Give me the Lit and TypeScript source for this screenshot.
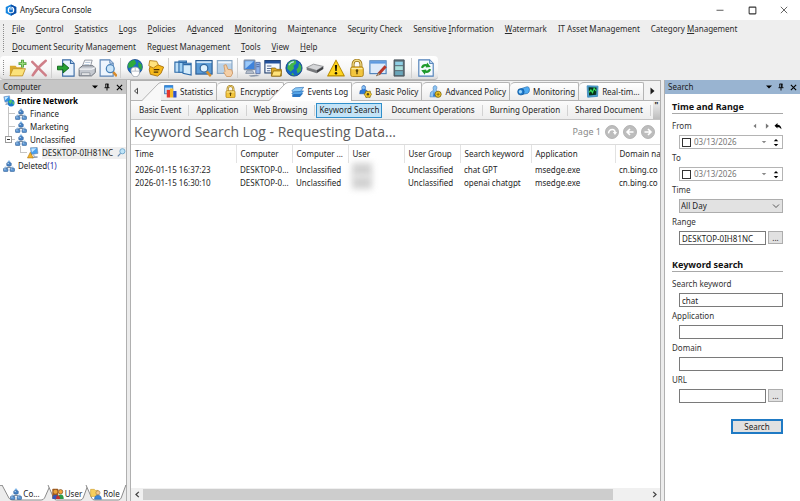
import { LitElement, html, css, svg, nothing } from "lit";
import { customElement, property } from "lit/decorators.js";
import { classMap } from "lit/directives/class-map.js";

const network = svg`
  <path d="M8 7v3M4 12v-2h8v2" fill="none" stroke="#5b6f86"/>
  <circle cx="8" cy="2.6" r="1.8" fill="#7fb4e6"/><rect x="5" y="3.6" width="6" height="4.4" rx="1" fill="#4a86c8" stroke="#1d4f8c" stroke-width=".7"/>
  <circle cx="3.5" cy="10.4" r="1.6" fill="#9fc6ea"/><rect x=".6" y="11" width="6" height="4.4" rx="1" fill="#5b94d0" stroke="#1d4f8c" stroke-width=".7"/>
  <circle cx="12.5" cy="10.4" r="1.6" fill="#9fc6ea"/><rect x="9.4" y="11" width="6" height="4.4" rx="1" fill="#5b94d0" stroke="#1d4f8c" stroke-width=".7"/>
  <path d="M6 4.6h2M1.6 12h2M10.4 12h2" stroke="#d8ecfb"/>`;

const lock = svg`
  <path d="M4.5 8V4.6a3.5 3.5 0 0 1 7 0V8" fill="none" stroke="#9a7416" stroke-width="2.6"/>
  <path d="M4.5 8V4.6a3.5 3.5 0 0 1 7 0V8" fill="none" stroke="#f5dd84" stroke-width="1.2"/>
  <rect x="2.4" y="7" width="11.2" height="8.6" rx="1.6" fill="#f2c53d" stroke="#a87a10" stroke-width=".8"/>
  <path d="M3.2 8.6h9.6" stroke="#fdf0b0"/><circle cx="8" cy="10.4" r="1.2" fill="#5a430a"/><path d="M8 10.6v3" stroke="#5a430a" stroke-width="1.2"/>`;

const ICONS: Record<string, unknown> = {
  logo: svg`<path d="M8 .5 15 4v8l-7 3.7L1 12V4z" fill="#1585e0"/><path d="M8 .5 15 4v8l-7 3.7z" fill="#0b4ea8"/><circle cx="8" cy="8" r="4.4" fill="#fff"/><path d="M6.3 8V6.6a1.7 1.7 0 0 1 3.4 0V8" fill="none" stroke="#1572cc"/><rect x="5.6" y="7.4" width="4.8" height="3.6" rx="1" fill="#1572cc"/>`,
  newFolder: svg`<path d="M.8 6h5l1.2 1.4H12V15H.8z" fill="#d9a92c"/><path d="M.8 15 3.6 8.6h11L12 15z" fill="#fbe27a" stroke="#c3942a" stroke-width=".8"/><path d="M12 .6v7M8.5 4.1h7" stroke="#4f9e3a" stroke-width="2.6"/><path d="M12 1.4v5.4M9.3 4.1h5.4" stroke="#9ada7d" stroke-width="1.1"/>`,
  remove: svg`<path d="M2 2.5 14 14.5M14 1.5Q7 7 2.4 14.5" fill="none" stroke="#cf7f88" stroke-width="2.2" stroke-linecap="round"/>`,
  importDoc: svg`<path d="M5 .8h7l3.2 3.2v11.2H5z" fill="#e8f2fc" stroke="#3a6ba5"/><path d="M12 .8V4h3.2" fill="#b8d2ee" stroke="#3a6ba5"/><path d="M.4 6.4h5V3.6L10.6 8l-5.2 4.4V9.6h-5z" fill="#27a232" stroke="#0d6117" stroke-width=".8"/>`,
  printer: svg`<path d="M6 1h6.6L11 7H3.6z" fill="#fff" stroke="#8a8f98" stroke-width=".8"/><path d="M6.4 3h4.6M5.6 5h4.6" stroke="#9db4cc" stroke-width=".7"/><path d="M1 8.4 4 6h9.4L15.4 8v4L12 15H1z" fill="#c4c8cf" stroke="#61666f" stroke-width=".8"/><path d="M1.2 9h11l3-1.2" fill="none" stroke="#f4f5f7"/><path d="M3 12.4h7.6v2H3z" fill="#fff" stroke="#747a84" stroke-width=".6"/>`,
  preview: svg`<path d="M1 .8h8.6l3 3v11.4H1z" fill="#eef5fd" stroke="#5b84b5"/><path d="M9.6.8v3h3" fill="#c3d9f0" stroke="#5b84b5" stroke-width=".8"/><path d="m12.6 11.6 2.6 3" stroke="#d88b2c" stroke-width="2.2" stroke-linecap="round"/><circle cx="10" cy="8.6" r="3.5" fill="#cbe6fa" stroke="#4880b8" stroke-width="1.1"/>`,
  webMouse: svg`<circle cx="8" cy="7" r="6.6" fill="#1d6fc4" stroke="#0b3c7a" stroke-width=".6"/><path d="M2 4Q5 0 8 1l1 3-3 3-4 1zM11 2.4l3 2.6v5l-3-3z" fill="#2faa3c"/><path d="M4.4 10C4.4 6.4 11.6 6 12 10c.6 3.2-1 5.8-3.6 5.8S4.4 13 4.4 10z" fill="#fff" stroke="#8a94a0" stroke-width=".7"/><path d="M8.2 7.4v3.2M5 10.8h6.6" stroke="#9aa4b0" stroke-width=".6"/>`,
  note: svg`<path d="m3.6 3 4.6 1.6 6.6 2.6-2.4 5.6-3 2.4-6.4-1.6-1-4z" fill="#f6b91c" stroke="#a86f08" stroke-width=".8"/><path d="M2.4 1.4 8.6 2l1.4 3-4.4 3-4-2z" fill="#ffe27d" stroke="#a86f08" stroke-width=".7"/><path d="M6 9.4h5M6 11.6h4" stroke="#4c3305" stroke-width="1.1"/>`,
  windows: svg`<path d="M.8 2.8h6.6v9H.8z" fill="#bfe0f8" stroke="#2c6aa8"/><path d="M4.4 1.8H11v10H4.4z" fill="#9fd0f4" stroke="#2c6aa8"/><path d="M8 3.8h7.2v10.4L8 12.6z" fill="#d5ecfb" stroke="#2c6aa8"/><path d="M4.6 3H11M8.2 5h7" stroke="#2c6aa8"/>`,
  screenSearch: svg`<rect x=".8" y="1.4" width="14.4" height="12" fill="#5b9bd6" stroke="#2b5c92"/><path d="M1.4 2.8h13.2" stroke="#cfe4f6" stroke-width="1.6"/><path d="m10 10.6 3.4 4" stroke="#d9912e" stroke-width="2.2" stroke-linecap="round"/><circle cx="8" cy="8.2" r="3.4" fill="#dff1fd" stroke="#34689e" stroke-width="1.1"/>`,
  screenHand: svg`<rect x="1.2" y="1.4" width="13" height="11.4" fill="#b9d2e8" stroke="#86a6c4"/><path d="M2 3h11.6" stroke="#eef5fb" stroke-width="1.6"/><path d="M7 5.6 9 5l1.6 4.2 3.4.4.8 3-1.6 3H9.4L7 12l1-1z" fill="#f4cfa6" stroke="#cf9a66" stroke-width=".8"/>`,
  computers: svg`<rect x="1" y="1" width="9.6" height="8.4" rx=".6" fill="#3e82dc" stroke="#7e8ea6"/><path d="M2 2h7.6L2 8.6z" fill="#9cc9f8"/><path d="M3.4 10.4h5l1.6 2.4H2.4z" fill="#b8c2d0" stroke="#6c7a90" stroke-width=".6"/><path d="M11.4 3h3.8v10h-3.8z" fill="#8fb2ea" stroke="#5a6fa0" stroke-width=".8"/><path d="M12 5h2.6M12 6.8h2.6" stroke="#3f5a94" stroke-width=".7"/><path d="m5 14.6 7-.6 3 1.2-8 .6z" fill="#8b97aa"/>`,
  windowFolder: svg`<rect x=".8" y="1.4" width="13.6" height="11" fill="#f6faff" stroke="#22406e"/><path d="M.8 2.8h13.6" stroke="#22519c" stroke-width="2.4"/><path d="M2.6 6.2h4M2.6 8.4h4M2.6 10.4h3" stroke="#5b6f96"/><path d="M6.6 8h3.6l1 1.2h4.2v6H6.6z" fill="#e0ac27" stroke="#8c660c" stroke-width=".7"/><path d="m6.6 15.2 1.8-4.6h7.2l-1 4.6z" fill="#ffe279" stroke="#8c660c" stroke-width=".7"/>`,
  globe: svg`<circle cx="8" cy="8" r="7.2" fill="#1567c4" stroke="#0a3a7a" stroke-width=".7"/><path d="M3 3.4Q6 .8 9.6 1.4L10 4 7.6 6 8 8.4l-3 3L2 8.4zM12.6 3.4l2 3.4-.4 3.6-3 2.4-1-3.4 1.6-2zM6.6 12l2 2.6-3-.6z" fill="#42b64a"/><path d="M3.4 5.6Q5 2.6 8 2.4" fill="none" stroke="#bde3ff" stroke-width="1"/>`,
  drive: svg`<path d="m.6 7.6 6-3 8.8 2-6 3.6z" fill="#d5d6d8" stroke="#77797c" stroke-width=".6"/><path d="m.6 7.6 8.8 2.6v2.4L.6 9.8z" fill="#77797c"/><path d="m9.4 10.2 6-3.6v2.2l-6 3.8z" fill="#3f4144"/>`,
  warning: svg`<path d="M8 1 15.4 15H.6z" fill="#ffd51f" stroke="#b88a00" stroke-width=".9" stroke-linejoin="round"/><path d="M7 5.4h2l-.4 5.2H7.4z" fill="#1c1600"/><circle cx="8" cy="12.6" r="1.1" fill="#1c1600"/>`,
  lock,
  windowPen: svg`<rect x=".8" y="1.6" width="14.4" height="11.4" fill="#dceafa" stroke="#4b7fb8"/><path d="M1 3h14" stroke="#5e9ae0" stroke-width="2.2"/><path d="m14.8 6.4-6.4 7.2" stroke="#b9382b" stroke-width="2.6"/><path d="m8.9 12-2.4 3 3.4-1.4z" fill="#f0cfa0" stroke="#5b3a20" stroke-width=".5"/>`,
  cabinet: svg`<path d="M3.6.8h9v14.4h-9z" fill="#61757e" stroke="#3e4b52" stroke-width=".8"/><path d="M4.6 2.4h6.8v3H4.6z" fill="#8fd0e6"/><path d="M4.6 6.4h6.8v3.4H4.6z" fill="#a9e0dc"/><path d="M4.6 10.8h6.8v3.4H4.6z" fill="#6aa6ba"/>`,
  refresh: svg`<path d="M1.6.8h9.6l3.2 3.2v11.2H1.6z" fill="#f4faff" stroke="#4e7fb8"/><path d="M11.2.8V4h3.2" fill="#bcd6f0" stroke="#4e7fb8" stroke-width=".8"/><path d="M4.4 7.8Q5.6 4.6 9.4 5.8M11.6 9Q10.4 12.2 6.6 11" fill="none" stroke="#1e9a2c" stroke-width="2"/><path d="m9 3 3.2 4-4.4.6zM7 14 3.8 10l4.4-.6z" fill="#1e9a2c"/>`,
  network,
  root: svg`<path d="M1 2.4 8.6 1l1 7-7 1.6z" fill="#3193e6" stroke="#88a" stroke-width=".6"/><path d="m2 3 6-1-5 5z" fill="#bfe6ff"/><path d="m5 9.4.4 2.4-2 .6 6-.6" fill="none" stroke="#8291a6"/><circle cx="10.8" cy="10.6" r="4.6" fill="#1c7ad0"/><path d="M7 9q1.6-3 4.6-2.6L12 9l-2 3zM13 8l2 2-1 3.4-1.6-2z" fill="#52c46a"/>`,
  agent: svg`<path d="M4.6 1 13.6.6l1 8-9 1.4z" fill="#4aa0ee" stroke="#71829b" stroke-width=".7"/><path d="m5.6 2 7-.4-6 5.4z" fill="#c5e6ff"/><path d="m9 10 .4 3 4.6.4-7 1" fill="none" stroke="#8291a6" stroke-width="1.2"/><path d="m4.4 7 4 7.6H.6z" fill="#f4b42a" stroke="#a06a08" stroke-width=".7"/>`,
  search: svg`<path d="M6.4 9.6 1.4 15" stroke="#5f83ad" stroke-width="2"/><circle cx="9.6" cy="5.8" r="4.6" fill="#bfe4f8" stroke="#5f9cc4" stroke-width="1.4"/>`,
  chart: svg`<rect x=".8" y=".8" width="10" height="10" fill="#bcdcf8" stroke="#2e6fb6"/><path d="M.8 2h10" stroke="#2e8ae0" stroke-width="2.4"/><path d="M3.4 6h4v9.4h-4z" fill="#e5382c"/><path d="M7.4 4.4h4v11h-4z" fill="#f5bd25"/><path d="M11.4 7.4h4v8h-4z" fill="#2d52c8"/>`,
  stack: svg`<path d="m1 12 4-3h10l-4 4.6H2z" fill="#2a78c8"/><path d="m1 9 4-3h10.4l-4 4.6H2z" fill="#55a5e8" stroke="#1c5ea8" stroke-width=".7"/><path d="m1 5.6 4.6-3.4 10-.6-4 5.2L2 7.2z" fill="#8ccbf8" stroke="#1c5ea8" stroke-width=".7"/>`,
  policy: svg`<path d="M5.6.6c2.2 0 2.8 2 2.2 3.8l-.4.8 3 2.2.6 3.4H.8L1.4 7l2.6-1.6C3 3.6 3.4.6 5.6.6z" fill="#2f7bd8" stroke="#154a94" stroke-width=".6"/><circle cx="5.6" cy="3.2" r="2" fill="#8bc2f4"/><path d="m8.4 7.4 2.8.6 2.6-.6.4 2.4 1.6 1.8-1.6 1.6-.6 2.2-2.6-.4-2.4.6-.8-2.4L6 11.6l1.8-1.6z" fill="#f3c928" stroke="#7a6208" stroke-width=".8"/><circle cx="11" cy="11.4" r="1.5" fill="#4d4523"/>`,
  advPolicy: svg`<path d="M7.4.8c2.2 0 2.8 2 2 4L8.8 6l2.6 3v5.6H1.2L2 9l3.6-2.6C4.4 4 5 .8 7.4.8z" fill="#8fc5f2" stroke="#3c78b8" stroke-width=".7"/><path d="M6 7 5 14h3z" fill="#2b76ce"/><circle cx="11.2" cy="11.4" r="3.8" fill="#f3c928" stroke="#7a6208"/><path d="M11.2 9.4v4M9.2 11.4h4" stroke="#7a6208"/>`,
  camera: svg`<path d="M5.4 4.4 12.6 2q2.6 0 2.8 3.4 0 4-2.4 5L6 11.6z" fill="#4eabf2" stroke="#165a9e" stroke-width=".7"/><ellipse cx="4.8" cy="8.4" rx="4" ry="4" fill="#1d79cc" stroke="#0e4c8a" stroke-width=".7"/><ellipse cx="4.2" cy="8.2" rx="2" ry="2.2" fill="#9bd6fc"/>`,
  realtime: svg`<path d="m1.4 1 13.4.4-.6 12.6L2 15z" fill="#4d9fd0" stroke="#3a86b8" stroke-width="1"/><path d="m3.2 2.8 9.8.2-.4 9-8.8 1z" fill="#06331c"/><path d="m4 9 2-3 2 3.4 2-5.4 2.4 3.4" fill="none" stroke="#35e05c" stroke-width="1.4"/>`,
  users: svg`<rect x=".4" y="1" width="8" height="13" rx="1" fill="#9c5a20"/><circle cx="4.6" cy="5" r="2.8" fill="#e9a23b"/><path d="M.4 14.6q0-5.6 4.2-5.6t4 5.6z" fill="#3454b4"/><circle cx="11.4" cy="5" r="3" fill="#f2a23a" stroke="#6b3c12" stroke-width=".8"/><path d="M7.4 14.6q0-5.8 4.2-5.8t4 5.8z" fill="#2d9a48"/><path d="M5.4 14.6q0-4.6 2.6-4.6t2.6 4.6z" fill="#c22f2f"/>`,
  role: svg`<path d="M.8 1.8h5l1 1.4h4v8H.8z" fill="#f7cf5c" stroke="#c99a2a" stroke-width=".8"/><circle cx="10.6" cy="6.4" r="2.8" fill="#f4c88c" stroke="#8c6a3a" stroke-width=".7"/><path d="M6 15q0-5.4 4.6-5.4T15.2 15z" fill="#3b86d8" stroke="#1c559a" stroke-width=".6"/>`,
  down: svg`<path d="M2 5h12l-6 6z" fill="currentColor"/>`,
  pin: svg`<path d="M5 2h6M5.6 2v7M9.8 2v7M3 9.4h10M8 9.4V15" fill="none" stroke="currentColor" stroke-width="1.8"/><path d="M8.6 2h2v7h-2z" fill="currentColor"/>`,
  close: svg`<path d="m2 2 12 12M14 2 2 14" stroke="currentColor" stroke-width="2.6"/>`,
  left: svg`<path d="M11 2v12L4 8z" fill="currentColor"/>`,
  leftOpen: svg`<path d="M11 2.6v10.8L5 8z" fill="none" stroke="currentColor" stroke-width="1.6"/>`,
  right: svg`<path d="M5 1v14l8-7z" fill="currentColor"/>`,
  back: svg`<path d="M1 7.4 7 2v3.4q7 0 8 9Q11 10 7 10v3z" fill="currentColor"/>`,
  chevron: svg`<path d="m2 5 6 6 6-6" fill="none" stroke="currentColor" stroke-width="1.6"/>`,
  chevLeft: svg`<path d="M11 2 4.6 8l6.4 6" fill="none" stroke="currentColor" stroke-width="3"/>`,
  chevRight: svg`<path d="m5 2 6.4 6L5 14" fill="none" stroke="currentColor" stroke-width="3"/>`,
  minimize: svg`<path d="M1 8.5h14" stroke="currentColor" stroke-width="1.6"/>`,
  maximize: svg`<rect x="2" y="2" width="12" height="12" rx="1" fill="none" stroke="currentColor" stroke-width="1.8"/>`,
  exit: svg`<path d="m1.6 1.6 12.8 12.8M14.4 1.6 1.6 14.4" stroke="currentColor" stroke-width="1.5"/>`,
  pageGo: svg`<circle cx="8" cy="8" r="7.4" fill="#bdbdbd" stroke="#adadad"/><path d="M4 9.6Q4.6 5 8.6 5.2q2.6.2 3 3" fill="none" stroke="#fff" stroke-width="1.7"/><path d="M9 8h4.8l-2.4 3.4z" fill="#fff"/>`,
  pagePrev: svg`<circle cx="8" cy="8" r="7.4" fill="#bdbdbd" stroke="#adadad"/><path d="M12 8H5M8 4.6 4.6 8 8 11.4" fill="none" stroke="#fff" stroke-width="1.8"/>`,
  pageNext: svg`<circle cx="8" cy="8" r="7.4" fill="#bdbdbd" stroke="#adadad"/><path d="M4 8h7M8 4.6 11.4 8 8 11.4" fill="none" stroke="#fff" stroke-width="1.8"/>`,
};

@customElement("ui-icon")
class UiIcon extends LitElement {
  @property() name = "";
  @property({ type: Number }) size = 16;
  static styles = css`
    :host { display: inline-flex; flex: none; }
    svg { display: block; }
  `;
  render() {
    return html`<svg width=${this.size} height=${this.size} viewBox="0 0 16 16" aria-hidden="true">${ICONS[this.name]}</svg>`;
  }
}

const base = css`
  *, *::before, *::after { box-sizing: border-box; }
  button, input, select {
    font: inherit; color: inherit; margin: 0; padding: 0; border: 0; border-radius: 0; background: none; min-width: 0;
  }
  button { display: inline-flex; align-items: center; justify-content: center; white-space: nowrap; }
  ul { list-style: none; margin: 0; padding: 0; }
`;

/* An underscore marks the letter that follows as the access key. */
const label = (text: string) => {
  const at = text.indexOf("_");
  return at < 0 ? html`<span>${text}</span>` : html`<span>${text.slice(0, at)}<u>${text[at + 1]}</u>${text.slice(at + 2)}</span>`;
};

@customElement("panel-header")
class PanelHeader extends LitElement {
  @property() heading = "";
  static styles = [base, css`
    :host {
      display: flex; align-items: center; height: 14px; padding: 0 1px 0 3px;
      background: var(--header, #c6c6c6); color: #1c1c1c;
    }
    .name { flex: 1; }
    .tool { width: 12px; height: 12px; color: #000; }
  `];
  render() {
    return html`<span class="name">${this.heading}</span>
      <button class="tool" aria-label="Panel menu"><ui-icon name="down" size="8"></ui-icon></button>
      <button class="tool" aria-label="Pin panel"><ui-icon name="pin" size="8"></ui-icon></button>
      <button class="tool" aria-label="Close panel"><ui-icon name="close" size="7"></ui-icon></button>`;
  }
}

@customElement("top-bar")
class TopBar extends LitElement {
  static styles = [base, css`
    :host { display: block; background: #eeeeee; }
    .title { display: flex; align-items: center; height: 20px; padding-left: 5px; background: #fff; }
    .name { flex: 1; padding-left: 3px; color: #222; }
    .win { width: 32px; height: 20px; color: #333; }
    .menu { display: flex; flex-wrap: wrap; column-gap: 11px; padding: 0 12px; }
    .menu button { height: 18px; color: #2b2b2b; }
    u { text-underline-offset: 1px; }
    .strip {
      display: flex; align-items: center; width: max-content; height: 24px; padding: 0 2px 0 7px;
      border-radius: 4px; border-bottom: 1px solid #b8b8b8;
      background: linear-gradient(#ffffff, #f6f6f6 60%, #dedede);
      position: relative;
    }
    .grip { position: absolute; left: 3px; top: 4px; bottom: 4px; border-left: 1px dotted #8c8c8c; }
    .menus { position: relative; }
    .tool { width: 21px; height: 22px; }
    .sep { width: 1px; height: 20px; margin: 0 3px 0 2px; background: #cfcfcf; }
  `];
  render() {
    const menus = ["_File", "_Control", "_Statistics", "_Logs", "_Policies", "A_dvanced", "_Monitoring", "Mai_ntenance",
      "Sec_urity Check", "Sensitive _Information", "_Watermark", "IT Asset Management", "Category _Management",
      "_Document Security Management", "Re_quest Management", "_Tools", "_View", "_Help"];
    const tools = ["newFolder", "remove", "", "importDoc", "printer", "preview", "", "webMouse", "note", "", "windows",
      "screenSearch", "screenHand", "", "computers", "windowFolder", "globe", "drive", "warning", "lock", "windowPen",
      "cabinet", "", "refresh"];
    return html`
      <header class="title">
        <ui-icon name="logo" size="12"></ui-icon><span class="name">AnySecura Console</span>
        <button class="win" aria-label="Minimize"><ui-icon name="minimize" size="8"></ui-icon></button>
        <button class="win" aria-label="Maximize"><ui-icon name="maximize" size="9"></ui-icon></button>
        <button class="win" aria-label="Close"><ui-icon name="exit" size="8"></ui-icon></button>
      </header>
      <div class="menus">
        <span class="grip"></span>
        <nav class="menu">${menus.map((m) => html`<button>${label(m)}</button>`)}</nav>
      </div>
      <div class="strip" role="toolbar" aria-label="Main">
        <span class="grip"></span>
        ${tools.map((t) => t
          ? html`<button class="tool" aria-label=${t}><ui-icon name=${t} size="18"></ui-icon></button>`
          : html`<span class="sep"></span>`)}
      </div>`;
  }
}

@customElement("computer-panel")
class ComputerPanel extends LitElement {
  static styles = [base, css`
    :host { display: flex; flex-direction: column; border-right: 1px solid #b0b0b0; background: #fff; }
    .tree { flex: 1; padding-left: 3px; }
    .row { display: flex; align-items: center; gap: 3px; height: 13px; white-space: nowrap; }
    .root { font-weight: 700; color: #000; gap: 2px; }
    .group { position: relative; }
    .group > li { position: relative; padding-left: 12px; }
    .group > li::before {
      content: ""; position: absolute; left: 5px; top: 0; width: 7px; height: 7px;
      border-left: 1px solid #c4c4c4; border-bottom: 1px solid #c4c4c4;
    }
    .group > li:not(:last-child)::after {
      content: ""; position: absolute; left: 5px; top: 7px; bottom: 0; border-left: 1px solid #c4c4c4;
    }
    .fold {
      position: absolute; left: 2px; top: 3px; width: 7px; height: 7px; z-index: 1;
      border: 1px solid #9a9a9a; background: #fff;
    }
    .fold::after { content: ""; width: 3px; height: 1px; background: #333; }
    .picked { background: #efefef; flex: 1; display: flex; align-items: center; justify-content: space-between; }
    .count { color: #2b2ba8; }
    .tabs { display: flex; height: 16px; padding: 0 2px; background: #ececec; border-top: 1px solid #9b9b9b; }
    .tab { position: relative; flex: 1 1 36px; height: 15px; }
    .tab.on { flex-basis: 44px; }
    .shape { position: absolute; inset: 0; width: 100%; height: 100%; overflow: visible; }
    .face { position: relative; display: flex; align-items: center; gap: 1px; }
  `];
  render() {
    const leaf = (icon: string, text: unknown) => html`<div class="row"><ui-icon name=${icon} size="12"></ui-icon>${text}</div>`;
    const tabs: [string, string, boolean][] = [["network", "Co...", true], ["users", "User", false], ["role", "Role", false]];
    return html`
      <panel-header heading="Computer"></panel-header>
      <ul class="tree">
        <li>
          <div class="row root"><ui-icon name="root" size="12"></ui-icon>Entire Network</div>
          <ul class="group">
            <li>${leaf("network", "Finance")}</li>
            <li>${leaf("network", "Marketing")}</li>
            <li>
              <button class="fold" aria-label="Collapse"></button>
              ${leaf("network", "Unclassified")}
              <ul class="group">
                <li><div class="row"><ui-icon name="agent" size="12"></ui-icon>
                  <span class="picked">DESKTOP-0IH81NC<ui-icon name="search" size="9"></ui-icon></span></div></li>
              </ul>
            </li>
          </ul>
        </li>
        <li>${leaf("network", html`<span>Deleted<span class="count">(1)</span></span>`)}</li>
      </ul>
      <div class="tabs">${tabs.map(([icon, text, on]) => html`
        <button class=${classMap({ tab: true, on })}>
          <svg class="shape" viewBox="0 0 40 15" preserveAspectRatio="none" aria-hidden="true">
            <path d="M0 -1 6 12q1 2 3 2h25q2 0 3-2l5-13" fill="#fff" stroke="#8c8c8c" vector-effect="non-scaling-stroke"/>
          </svg>
          <span class="face"><ui-icon name=${icon} size="12"></ui-icon>${text}</span>
        </button>`)}
      </div>`;
  }
}

@customElement("log-panel")
class LogPanel extends LitElement {
  static styles = [base, css`
    :host { display: flex; flex-direction: column; min-width: 0; background: #fff; border: solid #b0b0b0; border-width: 1px 1px 0; }
    .tabs { display: flex; align-items: flex-end; height: 20px; padding-right: 3px; background: #f2f2f2; border-bottom: 1px solid #b4b4b4; }
    .step { width: 10px; height: 19px; flex: none; }
    .strip { display: flex; flex: 1; min-width: 0; }
    .tab {
      position: relative; flex: none; gap: 3px; height: 18px; padding: 0 3px 0 7px; justify-content: flex-start;
      border: solid #b4b4b4; border-width: 1px 1px 0 0; border-radius: 5px 2px 0 0;
      background: linear-gradient(#ffffff, #ececec);
    }
    .tab.slant { margin-left: 20px; border-radius: 0 2px 0 0; padding-left: 3px; }
    .tab.on { margin-left: 4px; height: 19px; margin-bottom: -1px; background: #fff; z-index: 1; }
    .tab.on .edge path:first-child { fill: #fff; }
    .edge { position: absolute; right: 100%; top: -1px; width: 19px; height: 19px; }
    .subs { display: flex; align-items: center; height: 19px; padding-left: 2px; background: linear-gradient(#fbfbfb, #ededed); border-bottom: 1px solid #c4c4c4; }
    .sub { flex: none; height: 15px; padding: 0 6px; position: relative; }
    .sub + .sub { margin-left: 3px; }
    .sub:not(.on)::after { content: ""; position: absolute; right: -2px; top: 2px; bottom: 2px; border-left: 1px solid #d2d2d2; }
    .sub.on { border: 1px solid #2f8fcb; background: #c3e3f7; padding: 0 2px; }
    .more { margin-left: auto; width: 7px; height: 18px; background: linear-gradient(#f0f0f0, #bdbdbd); align-items: flex-start; font-weight: 700; line-height: 8px; }
    .head { display: flex; align-items: center; height: 25px; padding: 0 5px 0 3px; gap: 4px; border-bottom: 1px solid #dcdcdc; }
    h1 { flex: 1; margin: 0; font-family: "Open Sans", "Noto Sans", sans-serif; font-weight: 400; font-size: 14px; color: #5c5c5c; white-space: nowrap; }
    .page { color: #8a8a8a; font-size: 9px; }
    .grid { flex: 1; overflow: hidden; }
    table { width: 100%; table-layout: fixed; border-collapse: collapse; }
    th, td { padding: 0 0 0 4px; text-align: left; font-weight: 400; white-space: nowrap; }
    th { height: 18px; border-right: 1px solid #e2e2e2; }
    th:last-child { border-right: 0; }
    td { height: 13px; }
    .time { width: 105px; } .mid { width: 56px; } .word { width: 71px; } .app { width: 84px; }
    .masked { display: block; width: 20px; height: 13px; background: #d2d2d2; filter: blur(3px); }
    .scroll { display: flex; align-items: center; height: 13px; background: #f0f0f0; }
    .track { flex: 1; height: 11px; }
    .thumb { width: 93%; height: 11px; background: #cdcdcd; }
    .arrow { width: 12px; height: 13px; color: #444; }
  `];
  render() {
    const tabs = [["chart", "Statistics"], ["lock", "Encryption"], ["stack", "Events Log"], ["policy", "Basic Policy"],
      ["advPolicy", "Advanced Policy"], ["camera", "Monitoring"], ["realtime", "Real-tim..."]];
    const subs = ["Basic Event", "Application", "Web Browsing", "Keyword Search", "Document Operations", "Burning Operation", "Shared Document"];
    const columns = [["Time", "time"], ["Computer", "mid"], ["Computer ...", "mid"], ["User", "mid"], ["User Group", "mid"],
      ["Search keyword", "word"], ["Application", "app"], ["Domain na", ""]];
    const rows = [
      ["2026-01-15 16:37:23", "DESKTOP-0...", "Unclassified", "", "Unclassified", "chat GPT", "msedge.exe", "cn.bing.co"],
      ["2026-01-15 16:30:10", "DESKTOP-0...", "Unclassified", "", "Unclassified", "openai chatgpt", "msedge.exe", "cn.bing.co"],
    ];
    return html`
      <div class="tabs">
        <button class="step" aria-label="Previous tabs"><ui-icon name="leftOpen" size="8"></ui-icon></button>
        <div class="strip">${tabs.map(([icon, text], i) => html`
          <button class=${classMap({ tab: true, slant: i === 0 || i === 2, on: i === 2 })}>
            ${i === 0 || i === 2
              ? html`<svg class="edge" viewBox="0 0 19 19" aria-hidden="true"><path d="M0 19 15 3Q17 .5 19 .5V19z" fill="#f8f8f8"/><path d="M0 18.5 15 3Q17 .5 19 .5" fill="none" stroke="#b4b4b4"/></svg>`
              : nothing}
            <ui-icon name=${icon} size="13"></ui-icon>${text}
          </button>`)}
        </div>
        <button class="step" aria-label="Next tabs"><ui-icon name="right" size="8"></ui-icon></button>
      </div>
      <div class="subs">
        ${subs.map((s) => html`<button class=${classMap({ sub: true, on: s === "Keyword Search" })}>${s}</button>`)}
        <button class="more" aria-label="More">"</button>
      </div>
      <div class="head">
        <h1>Keyword Search Log - Requesting Data...</h1>
        <span class="page">Page 1</span>
        <button aria-label="Go to page"><ui-icon name="pageGo" size="14"></ui-icon></button>
        <button aria-label="Previous page"><ui-icon name="pagePrev" size="14"></ui-icon></button>
        <button aria-label="Next page"><ui-icon name="pageNext" size="14"></ui-icon></button>
      </div>
      <div class="grid">
        <table>
          <thead><tr>${columns.map(([c, w]) => html`<th class=${w}>${c}</th>`)}</tr></thead>
          <tbody>${rows.map((r) => html`<tr>${r.map((c) => html`<td>${c || html`<span class="masked"></span>`}</td>`)}</tr>`)}</tbody>
        </table>
      </div>
      <div class="scroll">
        <button class="arrow" aria-label="Scroll left"><ui-icon name="chevLeft" size="7"></ui-icon></button>
        <div class="track"><div class="thumb"></div></div>
        <button class="arrow" aria-label="Scroll right"><ui-icon name="chevRight" size="7"></ui-icon></button>
      </div>`;
  }
}

@customElement("search-panel")
class SearchPanel extends LitElement {
  static styles = [base, css`
    :host { display: block; border-left: 1px solid #b0b0b0; background: #fff; --header: #99b4d1; }
    .form { padding: 6px 17px 0 7px; }
    h2 { margin: 0 0 6px; height: 14px; line-height: 14px; font-size: 9px; font-weight: 700; border-bottom: 1px solid #a8a8a8; color: #111; }
    .field { display: flex; flex-direction: column; height: 32px; }
    .caption { display: flex; align-items: center; height: 12px; color: #333; }
    .caption label { flex: 1; }
    .nav { width: 12px; height: 12px; color: #777; }
    .nav.dark { width: 10px; color: #000; }
    .line { display: flex; gap: 2px; height: 14px; margin: 3px 0 0 7px; }
    .box { flex: 1; width: 0; height: 14px; padding: 0 2px; border: 1px solid #7a7a7a; background: #fff; }
    .date { display: flex; align-items: center; gap: 2px; padding: 0 2px; border-color: #b4b4b4; color: #777; }
    .date input[type="checkbox"] { appearance: none; width: 9px; height: 9px; border: 1px solid #333; background: #fff; flex: none; }
    .date input[type="text"] { flex: 1; width: 0; padding-left: 1px; }
    .spin { display: flex; flex-direction: column; width: 9px; color: #000; }
    .spin button { height: 5px; }
    .up { rotate: 180deg; }
    .drop { width: 10px; height: 10px; color: #888; }
    .pick { position: relative; display: flex; flex: 1; align-items: center; }
    select { appearance: none; width: 100%; height: 14px; padding: 0 1px; border: 1px solid #adadad; background: #e2e2e2; }
    .pick ui-icon { position: absolute; right: 3px; color: #333; pointer-events: none; }
    .dots { width: 15px; height: 13px; border: 1px solid #adadad; background: #e1e1e1; }
    .section { margin-top: 10px; }
    .actions { display: flex; justify-content: flex-end; padding-top: 13px; }
    .go { width: 52px; height: 15px; border: 2px solid #1f7ac4; background: #e1e1e1; }
  `];
  private date(id: string, text: string, nav = false) {
    return html`<div class="field">
      <div class="caption"><label for=${id}>${text}</label>
        ${nav ? html`<button class="nav" aria-label="Earlier"><ui-icon name="left" size="6"></ui-icon></button>
          <button class="nav" aria-label="Later"><ui-icon name="right" size="6"></ui-icon></button>
          <button class="nav dark" aria-label="Reset"><ui-icon name="back" size="8"></ui-icon></button>` : nothing}
      </div>
      <div class="line"><div class="box date">
        <input type="checkbox" aria-label="Limit ${text}">
        <input type="text" id=${id} .value=${"03/13/2026"}>
        <button class="drop" aria-label="Open calendar"><ui-icon name="down" size="6"></ui-icon></button>
        <span class="spin"><button aria-label="Up"><ui-icon class="up" name="down" size="6"></ui-icon></button>
          <button aria-label="Down"><ui-icon name="down" size="6"></ui-icon></button></span>
      </div></div></div>`;
  }
  private text(id: string, text: string, value = "", dots = false) {
    return html`<div class="field">
      <div class="caption"><label for=${id}>${text}</label></div>
      <div class="line"><input class="box" type="text" id=${id} .value=${value}>
        ${dots ? html`<button class="dots" aria-label="Browse ${text}">...</button>` : nothing}
      </div></div>`;
  }
  render() {
    return html`
      <panel-header heading="Search"></panel-header>
      <div class="form">
        <h2>Time and Range</h2>
        ${this.date("from", "From", true)}
        ${this.date("to", "To")}
        <div class="field">
          <div class="caption"><label for="time">Time</label></div>
          <div class="line"><div class="pick"><select id="time"><option>All Day</option></select><ui-icon name="chevron" size="8"></ui-icon></div></div>
        </div>
        ${this.text("range", "Range", "DESKTOP-0IH81NC", true)}
        <h2 class="section">Keyword search</h2>
        ${this.text("keyword", "Search keyword", "chat")}
        ${this.text("application", "Application")}
        ${this.text("domain", "Domain")}
        ${this.text("url", "URL", "", true)}
        <div class="actions"><button class="go">Search</button></div>
      </div>`;
  }
}

@customElement("app-root")
class AppRoot extends LitElement {
  static styles = css`
    :host {
      display: flex; flex-direction: column; min-height: 100vh; background: #ececec; color: #1e1e1e;
      font-family: "Noto Sans", "Open Sans", sans-serif; font-size: 8px; line-height: 12px;
    }
    main { flex: 1; display: grid; grid-template-columns: 127px minmax(0, 1fr) 136px; column-gap: 3px; }
  `;
  render() {
    return html`<top-bar></top-bar>
      <main><computer-panel></computer-panel><log-panel></log-panel><search-panel></search-panel></main>`;
  }
}
